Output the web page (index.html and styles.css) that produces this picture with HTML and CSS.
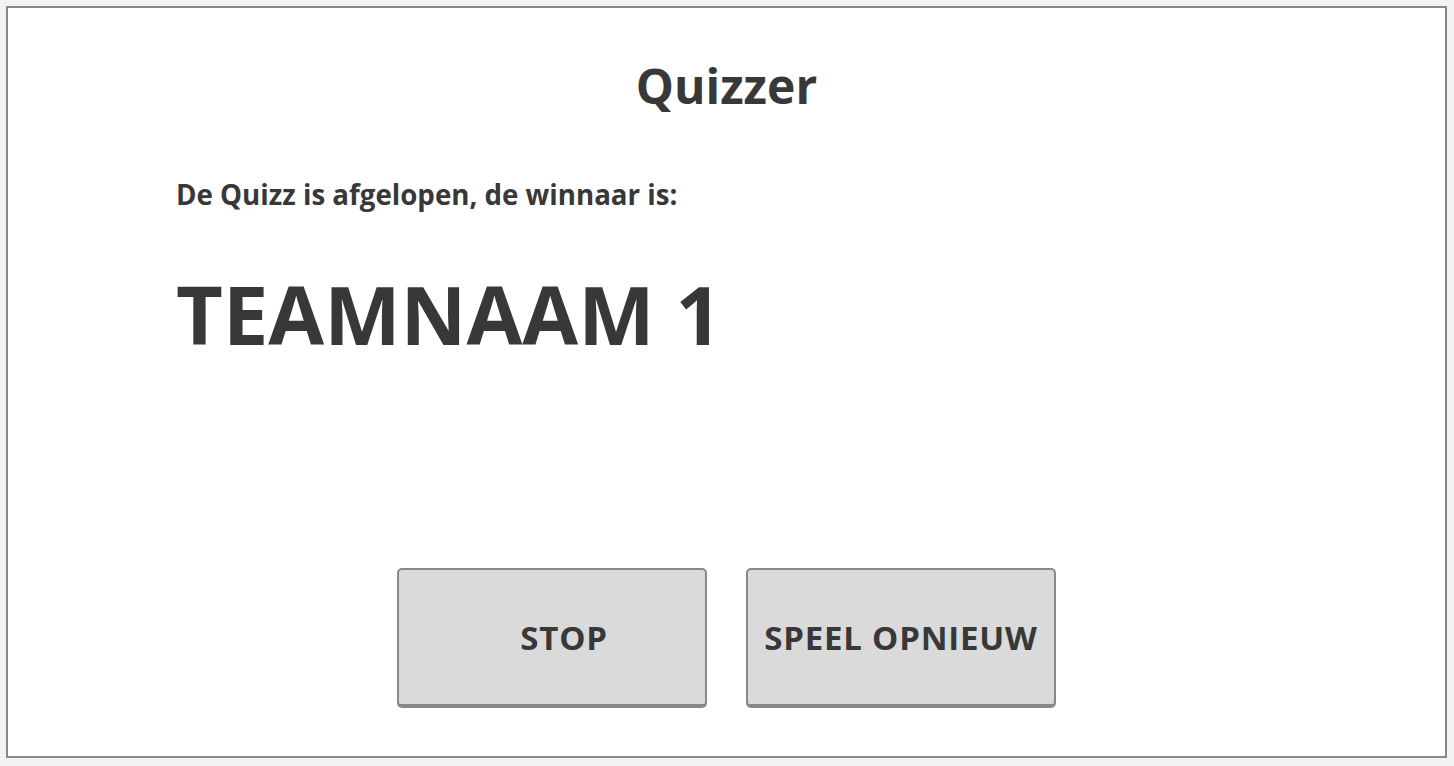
FILE: index.html
```html
<!DOCTYPE html>
<html lang="nl">
<head>
<meta charset="utf-8">
<title>Quizzer</title>
<link rel="stylesheet" href="styles.css">
</head>
<body>
<main class="frame">
  <h1 class="title">Quizzer</h1>
  <section class="result">
    <p class="intro">De Quizz is afgelopen, de winnaar is:</p>
    <p class="winner">TEAMNAAM 1</p>
  </section>
  <div class="actions">
    <button class="btn btn-stop">STOP</button>
    <button class="btn">SPEEL OPNIEUW</button>
  </div>
</main>
</body>
</html>
```
FILE: styles.css
```css
html, body {
  margin: 0;
  padding: 0;
  background: #f3f3f3;
}
body {
  padding: 6px 7px 8px 6px;
  font-family: "Open Sans", "Liberation Sans", sans-serif;
  color: #383838;
}
.frame {
  box-sizing: border-box;
  height: 752px;
  border: 2px solid #888;
  background: #fff;
  display: flex;
  flex-direction: column;
}
.title {
  margin: 46px 0 0;
  text-align: center;
  font-size: 48px;
  font-weight: 700;
  line-height: 64px;
}
.result {
  padding-left: 168px;
}
.intro {
  margin: 58px 0 0;
  font-size: 27.7px;
  font-weight: 700;
  line-height: 36px;
}
.winner {
  margin: 52px 0 0;
  font-size: 81px;
  font-weight: 700;
  line-height: 100px;
}
.actions {
  margin-top: auto;
  margin-bottom: 48px;
  display: flex;
  justify-content: center;
  gap: 39px;
}
.btn {
  box-sizing: border-box;
  width: 310px;
  height: 140px;
  background: #dadada;
  border: 2px solid #888;
  border-bottom-width: 4px;
  border-radius: 5px;
  font-family: "Open Sans", "Liberation Sans", sans-serif;
  font-size: 33px;
  letter-spacing: 0.8px;
  font-weight: 700;
  color: #383838;
  padding: 0;
}
.btn-stop {
  padding-left: 24px;
}
```
